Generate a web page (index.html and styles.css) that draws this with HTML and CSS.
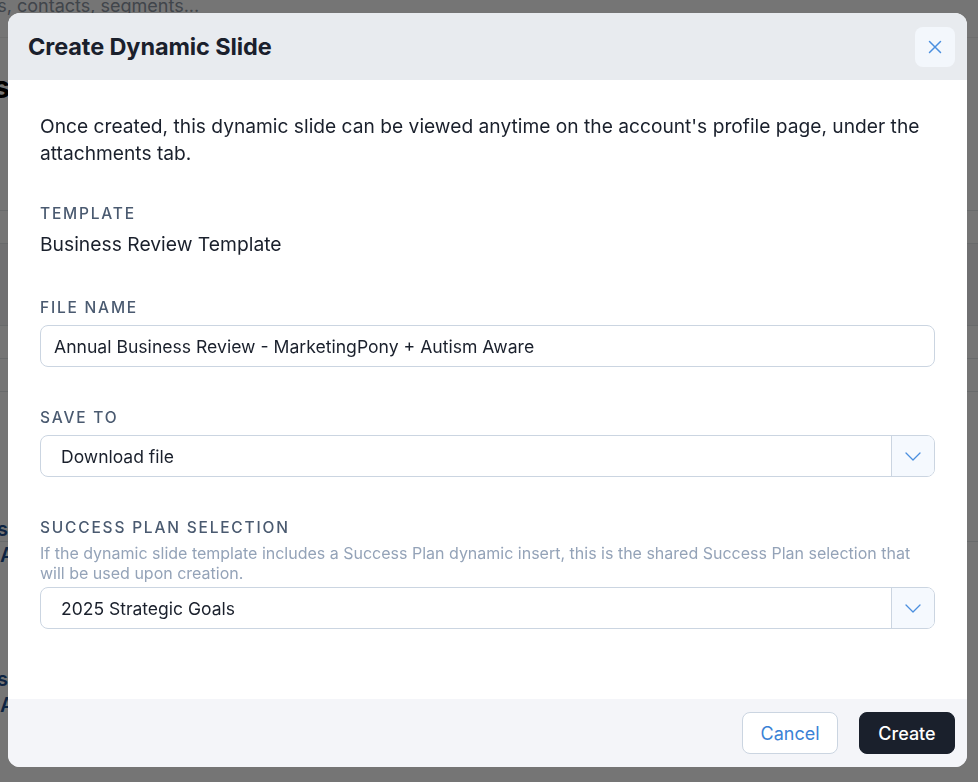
FILE: index.html
```html
<!DOCTYPE html>
<html lang="en">
  <head>
    <meta charset="UTF-8" />
    <meta name="viewport" content="width=device-width, initial-scale=1.0" />
    <title>Create Dynamic Slide</title>
    <link rel="stylesheet" href="styles.css">
  </head>
  <body>
    <div class="page">
      <div class="search">Search accounts, contacts, segments...</div>
      <h1 class="page-title">Segments</h1>
      <div class="table">
        <div class="row"></div>
        <div class="row row-tall"></div>
        <div class="row"></div>
        <div class="row"></div>
        <div class="row row-link"><span class="link link-end">Matches</span><span class="link">All accounts</span></div>
        <div class="row row-link"><span class="link link-end">Matches</span><span class="link">All accounts</span></div>
      </div>
    </div>

    <div class="overlay"></div>

    <div class="modal">
      <header class="modal-header">
        <h2>Create Dynamic Slide</h2>
        <button class="close-btn" aria-label="Close">
          <svg width="14" height="14" viewBox="0 0 14 14" fill="none">
            <path d="M1.5 1.5 L12.5 12.5 M12.5 1.5 L1.5 12.5" stroke="#4a8fdf" stroke-width="1.5" stroke-linecap="round" />
          </svg>
        </button>
      </header>

      <div class="modal-body">
        <p class="intro">
          Once created, this dynamic slide can be viewed anytime on the account's profile page, under the attachments tab.
        </p>

        <div class="field field-first">
          <div class="field-label">Template</div>
          <div class="field-value">Business Review Template</div>
        </div>

        <div class="field">
          <label class="field-label" for="fileName">File name</label>
          <input class="text-input" id="fileName" type="text" value="Annual Business Review - MarketingPony + Autism Aware" />
        </div>

        <div class="field">
          <div class="field-label">Save to</div>
          <div class="select">
            <span class="select-value">Download file</span>
            <span class="select-arrow">
              <svg width="16" height="9" viewBox="0 0 16 9" fill="none">
                <path d="M1 1 L8 8 L15 1" stroke="#4a8fdf" stroke-width="1.3" stroke-linecap="round" stroke-linejoin="round" />
              </svg>
            </span>
          </div>
        </div>

        <div class="field">
          <div class="field-label">Success plan selection</div>
          <p class="field-help">If the dynamic slide template includes a Success Plan dynamic insert, this is the shared Success Plan selection that will be used upon creation.</p>
          <div class="select select-tight">
            <span class="select-value">2025 Strategic Goals</span>
            <span class="select-arrow">
              <svg width="16" height="9" viewBox="0 0 16 9" fill="none">
                <path d="M1 1 L8 8 L15 1" stroke="#4a8fdf" stroke-width="1.3" stroke-linecap="round" stroke-linejoin="round" />
              </svg>
            </span>
          </div>
        </div>
      </div>

      <footer class="modal-footer">
        <button class="btn btn-cancel">Cancel</button>
        <button class="btn btn-create">Create</button>
      </footer>
    </div>
  </body>
</html>
```

FILE: styles.css
```css
* {
  margin: 0;
  padding: 0;
  box-sizing: border-box;
}

body {
  font-family: "Inter", "Noto Sans", sans-serif;
  background-color: #ffffff;
  color: #1a202c;
  width: 978px;
  height: 782px;
  overflow: hidden;
}

/* page behind the dialog */

.page {
  display: flex;
  flex-direction: column;
}

.search {
  height: 38px;
  font-size: 18px;
  line-height: 12px;
  color: #8d96a3;
  text-indent: -136px;
  border-bottom: 1px solid #f0f0f0;
  white-space: nowrap;
}

.page-title {
  font-size: 30px;
  font-weight: 700;
  color: #000;
  margin-top: 34px;
  margin-left: -138px;
  line-height: 30px;
}

.table {
  margin-top: 108px;
  display: flex;
  flex-direction: column;
}

.row {
  height: 33px;
  border-top: 1px solid #e3e6ea;
}

.row-tall {
  height: 82px;
  background-color: #f4f4f6;
}

.row-link {
  height: 150px;
  display: flex;
  flex-direction: column;
  padding-top: 124px;
  line-height: 26px;
}

.link {
  font-size: 20px;
  font-weight: 600;
  color: #1d4f91;
  white-space: nowrap;
}

.link-end {
  width: 120px;
  margin-left: -112px;
  text-align: right;
}

.overlay {
  position: fixed;
  inset: 0;
  background-color: rgba(0, 0, 0, 0.54);
}

/* dialog */

.modal {
  position: fixed;
  left: 8px;
  top: 13px;
  width: 959px;
  height: 754px;
  background-color: #ffffff;
  border-radius: 12px;
  overflow: hidden;
  display: flex;
  flex-direction: column;
}

.modal-header {
  height: 67px;
  flex-shrink: 0;
  background-color: #e8ebef;
  display: flex;
  align-items: center;
  justify-content: space-between;
  padding: 0 12px 0 20px;
}

.modal-header h2 {
  font-size: 23.5px;
  font-weight: 700;
  color: #1a202c;
  letter-spacing: -0.1px;
}

.close-btn {
  width: 40px;
  height: 40px;
  border: none;
  border-radius: 8px;
  background-color: #f3f7fc;
  display: flex;
  align-items: center;
  justify-content: center;
  cursor: pointer;
}

.modal-body {
  flex: 1;
  padding: 33px 32px 0 32px;
}

.intro {
  font-size: 19.2px;
  line-height: 27px;
  color: #1a202c;
}

.field {
  margin-top: 40px;
  display: flex;
  flex-direction: column;
}

.field-first {
  margin-top: 36px;
}

.field-first + .field {
  margin-top: 39px;
}

.field-label {
  font-size: 15.5px;
  line-height: 20px;
  font-weight: 500;
  text-transform: uppercase;
  letter-spacing: 1.8px;
  color: #4a5a70;
  padding-top: 1px;
  margin-bottom: 7px;
}

.field-value {
  font-size: 19.3px;
  line-height: 28px;
  margin-top: -1px;
  color: #1a202c;
}

.text-input {
  height: 42px;
  width: 100%;
  border: 1px solid #cbd5e1;
  border-radius: 8px;
  padding: 0 13px;
  font-family: inherit;
  font-size: 17.6px;
  color: #1a202c;
  background-color: #fff;
  outline: none;
}

.field-help {
  font-size: 16px;
  line-height: 20px;
  color: #94a3b8;
  margin-top: -2px;
}

.select {
  height: 42px;
  border: 1px solid #cbd5e1;
  border-radius: 8px;
  display: flex;
  align-items: stretch;
  overflow: hidden;
}

.select-tight {
  margin-top: 4px;
}

.select-value {
  flex: 1;
  display: flex;
  align-items: center;
  padding-left: 20px;
  font-size: 17.5px;
  color: #1a202c;
}

.select-arrow {
  width: 43px;
  display: flex;
  align-items: center;
  justify-content: center;
  border-left: 1px solid #cbd5e1;
  background-color: #f5f9fe;
}

.modal-footer {
  height: 68px;
  flex-shrink: 0;
  background-color: #f4f5f9;
  display: flex;
  align-items: center;
  justify-content: flex-end;
  gap: 21px;
  padding: 0 12px;
}

.btn {
  height: 42px;
  width: 96px;
  border-radius: 8px;
  font-family: inherit;
  font-size: 18px;
  cursor: pointer;
}

.btn-cancel {
  background-color: #ffffff;
  border: 1px solid #cbd5e1;
  color: #3b82d6;
}

.btn-create {
  background-color: #1a202c;
  border: 1px solid #1a202c;
  color: #ffffff;
  font-weight: 500;
}
```
